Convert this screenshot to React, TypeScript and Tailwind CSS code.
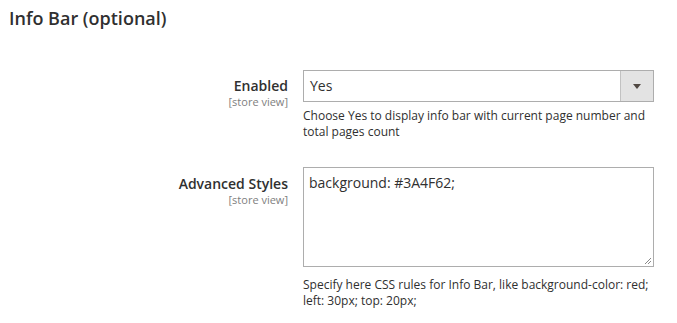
import React from 'react'

const font = { fontFamily: '"Open Sans", "Noto Sans", sans-serif' }

function Label({ title }: { title: string }) {
  return (
    <div className="w-[303px] shrink-0 pr-[15px] text-right">
      <div className="text-[14px] font-semibold leading-[18px] text-[#303030]">{title}</div>
      <div className="text-[11px] leading-[14px] text-[#808080]">[store view]</div>
    </div>
  )
}

export default function App() {
  return (
    <div className="h-[323px] w-[677px] bg-white" style={font}>
      <h2 className="pl-[9px] pt-[6px] text-[18px] font-semibold leading-[24px] text-[#303030]">
        Info Bar (optional)
      </h2>

      <div className="mt-[40px] flex">
        <div className="pt-[7px]">
          <Label title="Enabled" />
        </div>
        <div className="w-[351px]">
          <div className="flex h-[32px] border border-[#adadad] bg-white">
            <div className="flex-1 pl-[6px] text-[14px] leading-[30px] text-[#303030]">Yes</div>
            <div className="flex w-[33px] items-center justify-center border-l border-[#c2c2c2] bg-[#e3e3e3]">
              <svg width="8" height="5" viewBox="0 0 8 5">
                <path d="M0 0 L8 0 L4 5 Z" fill="#514943" />
              </svg>
            </div>
          </div>
          <p className="mt-[6px] text-[12px] leading-[16px] text-[#303030]">
            Choose Yes to display info bar with current page number and total pages count
          </p>
        </div>
      </div>

      <div className="mt-[27px] flex">
        <div className="pt-[8px]">
          <Label title="Advanced Styles" />
        </div>
        <div className="w-[351px]">
          <div className="relative h-[100px] border border-[#adadad] bg-white px-[5px] pt-[5px] text-[14px] leading-[20px] text-[#303030]">
            background: #3A4F62;
            <svg className="absolute bottom-[1px] right-[1px]" width="8" height="8" viewBox="0 0 8 8">
              <path d="M7 1 L1 7 M7 4 L4 7" stroke="#888" strokeWidth="1" />
            </svg>
          </div>
          <p className="mt-[10px] text-[12px] leading-[16px] text-[#303030]">
            Specify here CSS rules for Info Bar, like background-color: red; left: 30px; top: 20px;
          </p>
        </div>
      </div>
    </div>
  )
}
